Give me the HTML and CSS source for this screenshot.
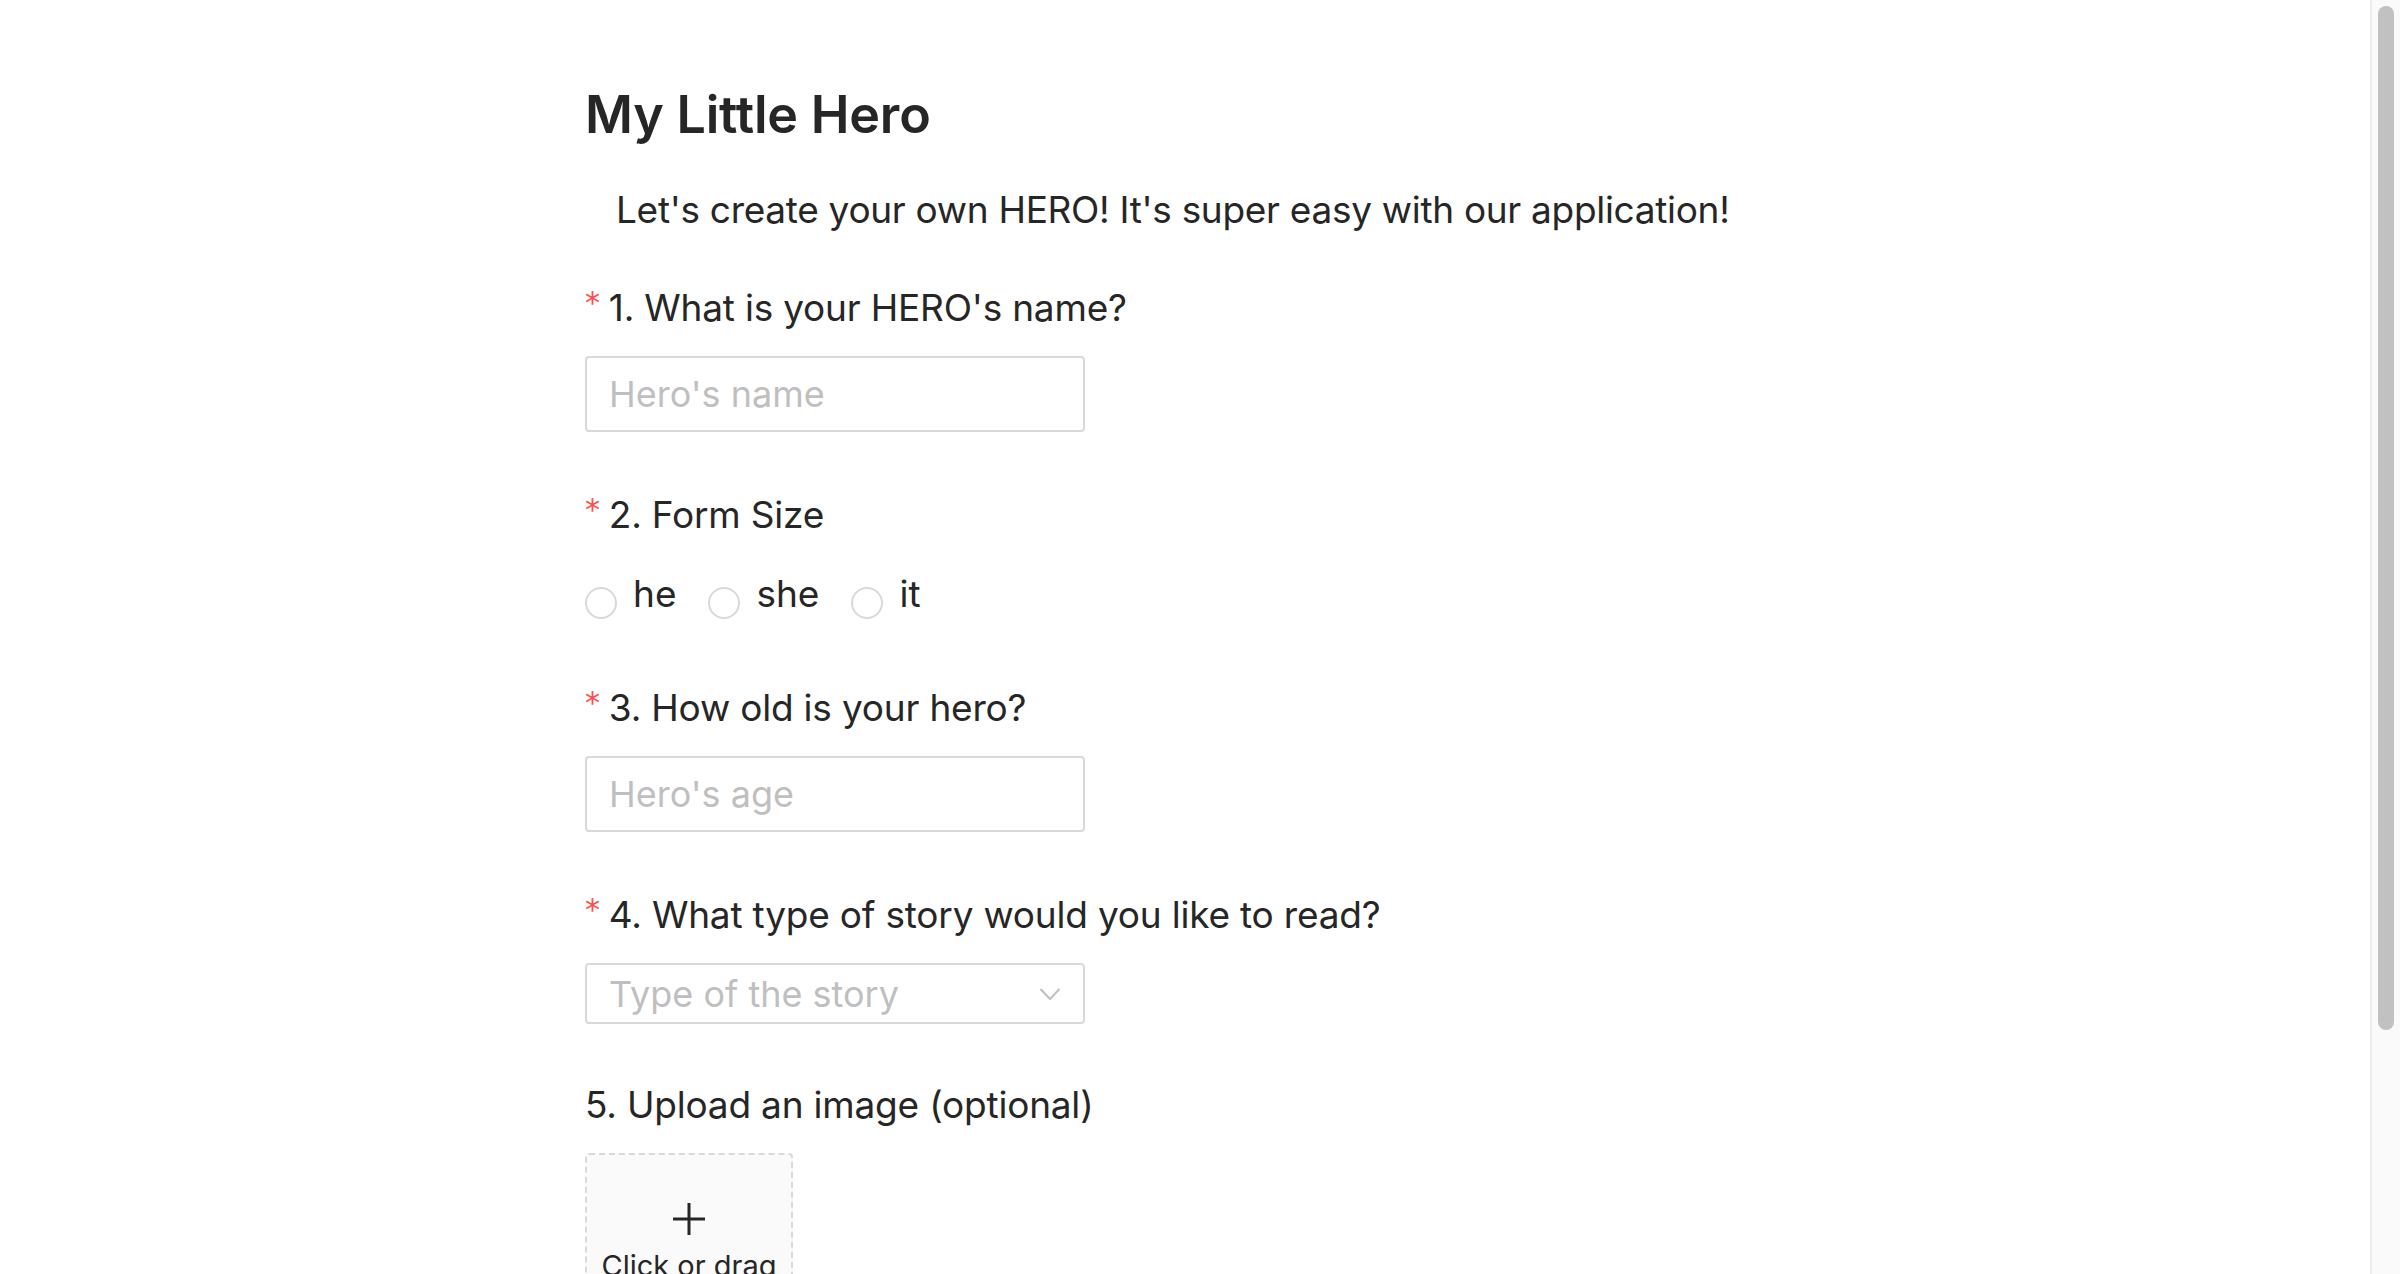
FILE: index.html
```html
<!DOCTYPE html>
<html lang="en">
<head>
<meta charset="utf-8">
<title>My Little Hero</title>
<link rel="stylesheet" href="styles.css">
</head>
<body>
<div class="screen">
<main class="page">
  <h1 class="title">My Little Hero</h1>
  <p class="intro">Let's create your own HERO! It's super easy with our application!</p>
  <form class="form">
    <div class="item">
      <label class="label"><span class="req">*</span><span>1. What is your HERO's name?</span></label>
      <input class="input" type="text" placeholder="Hero's name">
    </div>
    <div class="item">
      <label class="label"><span class="req">*</span><span>2. Form Size</span></label>
      <div class="radios">
        <label class="radio"><input class="dot" type="radio" name="form"><span class="radio-text">he</span></label>
        <label class="radio"><input class="dot" type="radio" name="form"><span class="radio-text">she</span></label>
        <label class="radio"><input class="dot" type="radio" name="form"><span class="radio-text">it</span></label>
      </div>
    </div>
    <div class="item">
      <label class="label"><span class="req">*</span><span>3. How old is your hero?</span></label>
      <input class="input" type="text" placeholder="Hero's age">
    </div>
    <div class="item item-select">
      <label class="label"><span class="req">*</span><span>4. What type of story would you like to read?</span></label>
      <div class="select">
        <span class="select-ph">Type of the story</span>
        <svg class="chev" width="22" height="14" viewBox="0 0 22 14"><path d="M1.5 2 L11 12 L20.5 2" fill="none" stroke="#bfbfbf" stroke-width="2"/></svg>
      </div>
    </div>
    <div class="item">
      <label class="label"><span>5. Upload an image (optional)</span></label>
      <div class="upload">
        <svg class="plus" width="32" height="32" viewBox="0 0 32 32"><path d="M16 0 V32 M0 16 H32" stroke="#262626" stroke-width="3"/></svg>
        <div class="upload-text">Click or drag file to this area to upload</div>
      </div>
    </div>
    <div class="item">
      <button class="submit" type="button">Create my hero</button>
    </div>
  </form>
</main>
</div>
<div class="scrollbar"><div class="thumb"></div></div>
</body>
</html>
```
FILE: styles.css
```css
html, body {
  margin: 0;
  padding: 0;
  background: #ffffff;
}

body {
  display: flex;
  align-items: flex-start;
  font-family: Inter, "Noto Sans", "Liberation Sans", sans-serif;
  color: #262626;
}

.screen {
  flex: 1;
  min-width: 0;
}

.scrollbar {
  flex: none;
  position: sticky;
  top: 0;
  box-sizing: border-box;
  width: 30px;
  height: 100vh;
  background: #fafafa;
  border-left: 2px solid #ececec;
  padding: 6px 6px 0 6px;
}
.thumb {
  height: 1024px;
  border-radius: 8px;
  background: #c1c1c1;
}

.page {
  width: 1200px;
  margin: 0 auto;
  padding: 82px 0 98px;
}

.title {
  margin: 0;
  font-size: 52px;
  line-height: 66px;
  font-weight: 600;
  letter-spacing: -0.2px;
  color: #262626;
}

.intro {
  margin: 33px 0 0;
  padding-left: 31px;
  font-size: 37px;
  line-height: 57px;
  letter-spacing: -0.3px;
}

.form {
  margin-top: 39px;
}

.item {
  margin-bottom: 52px;
}
.item-select {
  margin-bottom: 50px;
}

.label {
  display: flex;
  align-items: flex-start;
  font-size: 37px;
  line-height: 62px;
  letter-spacing: -0.2px;
  padding-bottom: 17px;
}

.req {
  font-family: "DejaVu Sans", sans-serif;
  font-size: 30px;
  line-height: 30px;
  color: #ff4d4f;
  margin-top: 11px;
  margin-right: 9px;
}

.input {
  display: block;
  box-sizing: border-box;
  width: 500px;
  height: 76px;
  margin: 0;
  padding: 0 22px;
  border: 2px solid #d9d9d9;
  border-radius: 4px;
  font-family: Inter, "Noto Sans", "Liberation Sans", sans-serif;
  font-size: 36px;
  color: #262626;
  background: #fff;
  outline: none;
}
.input::placeholder {
  color: #bfbfbf;
}

.radios {
  display: flex;
  height: 62px;
}
.radio {
  display: inline-flex;
  align-items: center;
  font-size: 37px;
  line-height: 62px;
  margin-right: 16px;
}
.dot {
  appearance: none;
  -webkit-appearance: none;
  box-sizing: border-box;
  width: 32px;
  height: 32px;
  margin: 18px 0 0;
  border: 2px solid #d9d9d9;
  border-radius: 50%;
  background: #fff;
}
.radio-text {
  padding: 0 16px;
}

.select {
  box-sizing: border-box;
  width: 500px;
  height: 61px;
  border: 2px solid #d9d9d9;
  border-radius: 4px;
  display: flex;
  align-items: center;
  justify-content: space-between;
  padding: 0 22px;
  background: #fff;
}
.select-ph {
  font-size: 36px;
  color: #bfbfbf;
}

.upload {
  box-sizing: border-box;
  width: 208px;
  height: 208px;
  border: 2px dashed #d9d9d9;
  border-radius: 4px;
  background: #fafafa;
  display: flex;
  flex-direction: column;
  align-items: center;
  padding-top: 48px;
  overflow: hidden;
}
.plus {
  display: block;
  flex: none;
}
.upload-text {
  margin-top: 9px;
  font-size: 29px;
  line-height: 44px;
  text-align: center;
  color: #262626;
}

.submit {
  height: 80px;
  padding: 0 30px;
  border: 0;
  border-radius: 4px;
  background: #1890ff;
  color: #fff;
  font-family: Inter, "Noto Sans", "Liberation Sans", sans-serif;
  font-size: 32px;
}
```
